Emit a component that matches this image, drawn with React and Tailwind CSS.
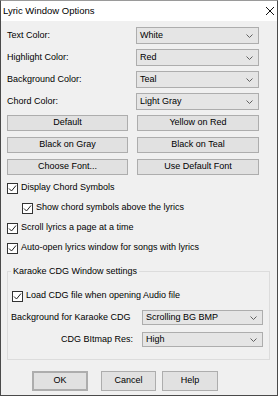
import React from 'react'

function Chevron() {
  return (
    <svg width="7" height="4" viewBox="0 0 7 4" className="shrink-0">
      <polyline points="0.5,0.5 3.5,3.5 6.5,0.5" fill="none" stroke="#606060" strokeWidth="1" />
    </svg>
  )
}

function Combo({ value, className = '' }) {
  return (
    <div className={`flex items-center justify-between bg-[#e5e5e5] border border-[#adadad] pl-[3px] pr-[5px] ${className}`}>
      <span>{value}</span>
      <Chevron />
    </div>
  )
}

function Button({ children, className = '' }) {
  return (
    <div className={`flex items-center justify-center bg-[#e1e1e1] border border-[#adadad] ${className}`}>
      {children}
    </div>
  )
}

function Check({ label, className = '' }) {
  return (
    <div className={`flex items-center h-[20px] gap-[3px] ${className}`}>
      <div className="w-[11px] h-[11px] border border-[#333333] bg-white flex items-center justify-center">
        <svg width="9" height="9" viewBox="0 0 9 9">
          <polyline points="1,4.5 3.5,7 8,1.5" fill="none" stroke="#222" strokeWidth="1" />
        </svg>
      </div>
      <span>{label}</span>
    </div>
  )
}

export default function App() {
  const colors = [
    ['Text Color:', 'White'],
    ['Highlight Color:', 'Red'],
    ['Background Color:', 'Teal'],
    ['Chord Color:', 'Light Gray'],
  ]
  const presets = ['Default', 'Yellow on Red', 'Black on Gray', 'Black on Teal', 'Choose Font...', 'Use Default Font']

  return (
    <div className="w-[278px] h-[396px] bg-[#f0f0f0] border border-[#4a4a4a] border-t-[#9a9a9a] flex flex-col overflow-hidden text-black text-[9px] font-['Liberation_Sans',Arial,sans-serif]">
      {/* title bar */}
      <div className="h-[20px] bg-white flex items-center justify-between pl-[2px] pr-[2px] shrink-0">
        <span className="text-[9.5px]">Lyric Window Options</span>
        <svg width="10" height="10" viewBox="0 0 10 10">
          <path d="M1 1 L9 9 M9 1 L1 9" stroke="#111" strokeWidth="1" />
        </svg>
      </div>

      <div className="flex flex-col pl-[6px] pt-[6px]">
        {/* colour pickers */}
        <div className="grid grid-cols-[129px_123px] gap-y-[5px]">
          {colors.map(([label, value]) => (
            <React.Fragment key={label}>
              <div className="flex items-center h-[17px]">{label}</div>
              <Combo value={value} className="h-[17px]" />
            </React.Fragment>
          ))}
        </div>

        {/* preset buttons */}
        <div className="grid grid-cols-[121px_122px] gap-x-[9px] gap-y-[6px] mt-[5px]">
          {presets.map(p => (
            <Button key={p} className="h-[16px]">{p}</Button>
          ))}
        </div>

        {/* options */}
        <div className="flex flex-col mt-[3px]">
          <Check label="Display Chord Symbols" />
          <Check label="Show chord symbols above the lyrics" className="ml-[15px]" />
          <Check label="Scroll lyrics a page at a time" />
          <Check label="Auto-open lyrics window for songs with lyrics" />
        </div>

        {/* karaoke group */}
        <fieldset className="w-[263px] mt-[7px] border border-[#dcdcdc] pb-[12px]">
          <legend className="ml-[3px] px-[2px] leading-[12px]">Karaoke CDG Window settings</legend>
          <Check label="Load CDG file when opening Audio file" className="ml-[4px] mt-[9px]" />
          <div className="grid grid-cols-[134px_121px] gap-y-[7px] mt-[4px]">
            <div className="flex items-center h-[15px] pl-[3px]">Background for Karaoke CDG</div>
            <Combo value="Scrolling BG BMP" className="h-[15px]" />
            <div className="flex items-center justify-end h-[15px] pr-[9px]">CDG BItmap Res:</div>
            <Combo value="High" className="h-[15px]" />
          </div>
        </fieldset>

        {/* dialog buttons */}
        <div className="flex mt-[11px] ml-[25px]">
          <Button className="w-[56px] h-[20px] border-2 border-[#0078d7]">OK</Button>
          <Button className="w-[55px] h-[20px] ml-[13px]">Cancel</Button>
          <Button className="w-[56px] h-[20px] ml-[6px]">Help</Button>
        </div>
      </div>
    </div>
  )
}
